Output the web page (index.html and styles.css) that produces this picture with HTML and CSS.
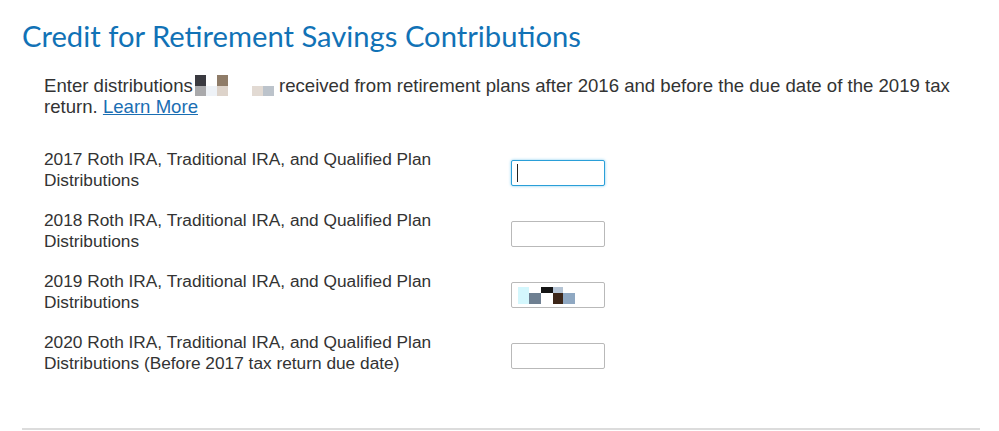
FILE: index.html
```html
<!DOCTYPE html>
<html lang="en">
<head>
    <meta charset="UTF-8">
    <title>Credit for Retirement Savings Contributions</title>
    <link rel="stylesheet" href="styles.css">
</head>
<body>
    <div class="page">
        <h1 class="titulo">Credit for Retirement Savings Contributions</h1>

        <p class="intro">
            Enter distributions<svg class="pix pix-a" width="81" height="21" viewBox="0 0 81 21">
                <rect x="2" y="0" width="11" height="11" fill="#3a3a40"/>
                <rect x="2" y="11" width="11" height="10" fill="#a9a9ab"/>
                <rect x="13" y="11" width="11" height="10" fill="#eef2f7"/>
                <rect x="24" y="0" width="11" height="11" fill="#8f7c68"/>
                <rect x="24" y="11" width="11" height="10" fill="#ddd3ca"/>
                <rect x="59" y="11" width="11" height="10" fill="#e2dad3"/>
                <rect x="70" y="11" width="11" height="10" fill="#bcc3cb"/>
            </svg> received from retirement plans after 2016 and before the due date of the 2019 tax return. <a href="#">Learn More</a>
        </p>

        <div class="campos">
            <label class="rotulo">2017 Roth IRA, Traditional IRA, and Qualified Plan Distributions</label>
            <div class="caixa ativa"><span class="cursor"></span></div>

            <label class="rotulo">2018 Roth IRA, Traditional IRA, and Qualified Plan Distributions</label>
            <div class="caixa"></div>

            <label class="rotulo">2019 Roth IRA, Traditional IRA, and Qualified Plan Distributions</label>
            <div class="caixa preenchida">
                <svg class="pix" width="58" height="17" viewBox="0 0 58 17">
                    <rect x="0" y="0" width="11" height="17" fill="#d4f7fd"/>
                    <rect x="11" y="6" width="12" height="11" fill="#6e7f91"/>
                    <rect x="23" y="0" width="12" height="6" fill="#141414"/>
                    <rect x="35" y="0" width="10" height="6" fill="#b5c4d4"/>
                    <rect x="35" y="6" width="10" height="11" fill="#3c2618"/>
                    <rect x="45" y="6" width="12" height="11" fill="#8fa8c2"/>
                </svg>
            </div>

            <label class="rotulo">2020 Roth IRA, Traditional IRA, and Qualified Plan Distributions (Before 2017 tax return due date)</label>
            <div class="caixa"></div>
        </div>

        <hr class="divisor">
    </div>
</body>
</html>
```

FILE: styles.css
```css
* {
    margin: 0;
    padding: 0;
    box-sizing: border-box;
}

body {
    background-color: #fff;
    font-family: 'Liberation Sans', Arial, sans-serif;
    color: #333;
}

.page {
    padding: 18px 19px 0 22px;
}

.titulo {
    font-family: 'Lato', sans-serif;
    font-weight: 400;
    font-size: 29.2px;
    line-height: 36px;
    color: #1172b6;
}

.intro {
    margin: 21px 0 0 22px;
    font-size: 18.6px;
    line-height: 21px;
    color: #333;
}

.intro a {
    color: #1a6eb3;
}

.pix {
    display: inline-block;
    vertical-align: -4px;
}

.campos {
    margin: 32px 0 0 22px;
    display: grid;
    grid-template-columns: 467px 94px;
    row-gap: 19px;
    align-items: start;
}

.rotulo {
    font-size: 17.3px;
    line-height: 21px;
    width: 400px;
    color: #333;
}

.caixa {
    margin-top: 11px;
    height: 26px;
    border: 1px solid #b9b9b9;
    border-radius: 2px;
    background: #fff;
    padding: 3px 6px;
    display: flex;
    align-items: center;
}

.caixa.ativa {
    border-color: #2a9fd8;
    box-shadow: 0 0 3px #7cc8ee;
}

.cursor {
    width: 1px;
    height: 18px;
    background: #222;
    margin-left: -1px;
}

.caixa.preenchida {
    padding: 0 0 0 6px;
}

.divisor {
    margin: 54px 0 0 0;
    border: none;
    border-top: 2px solid #dcdcdc;
}
```
